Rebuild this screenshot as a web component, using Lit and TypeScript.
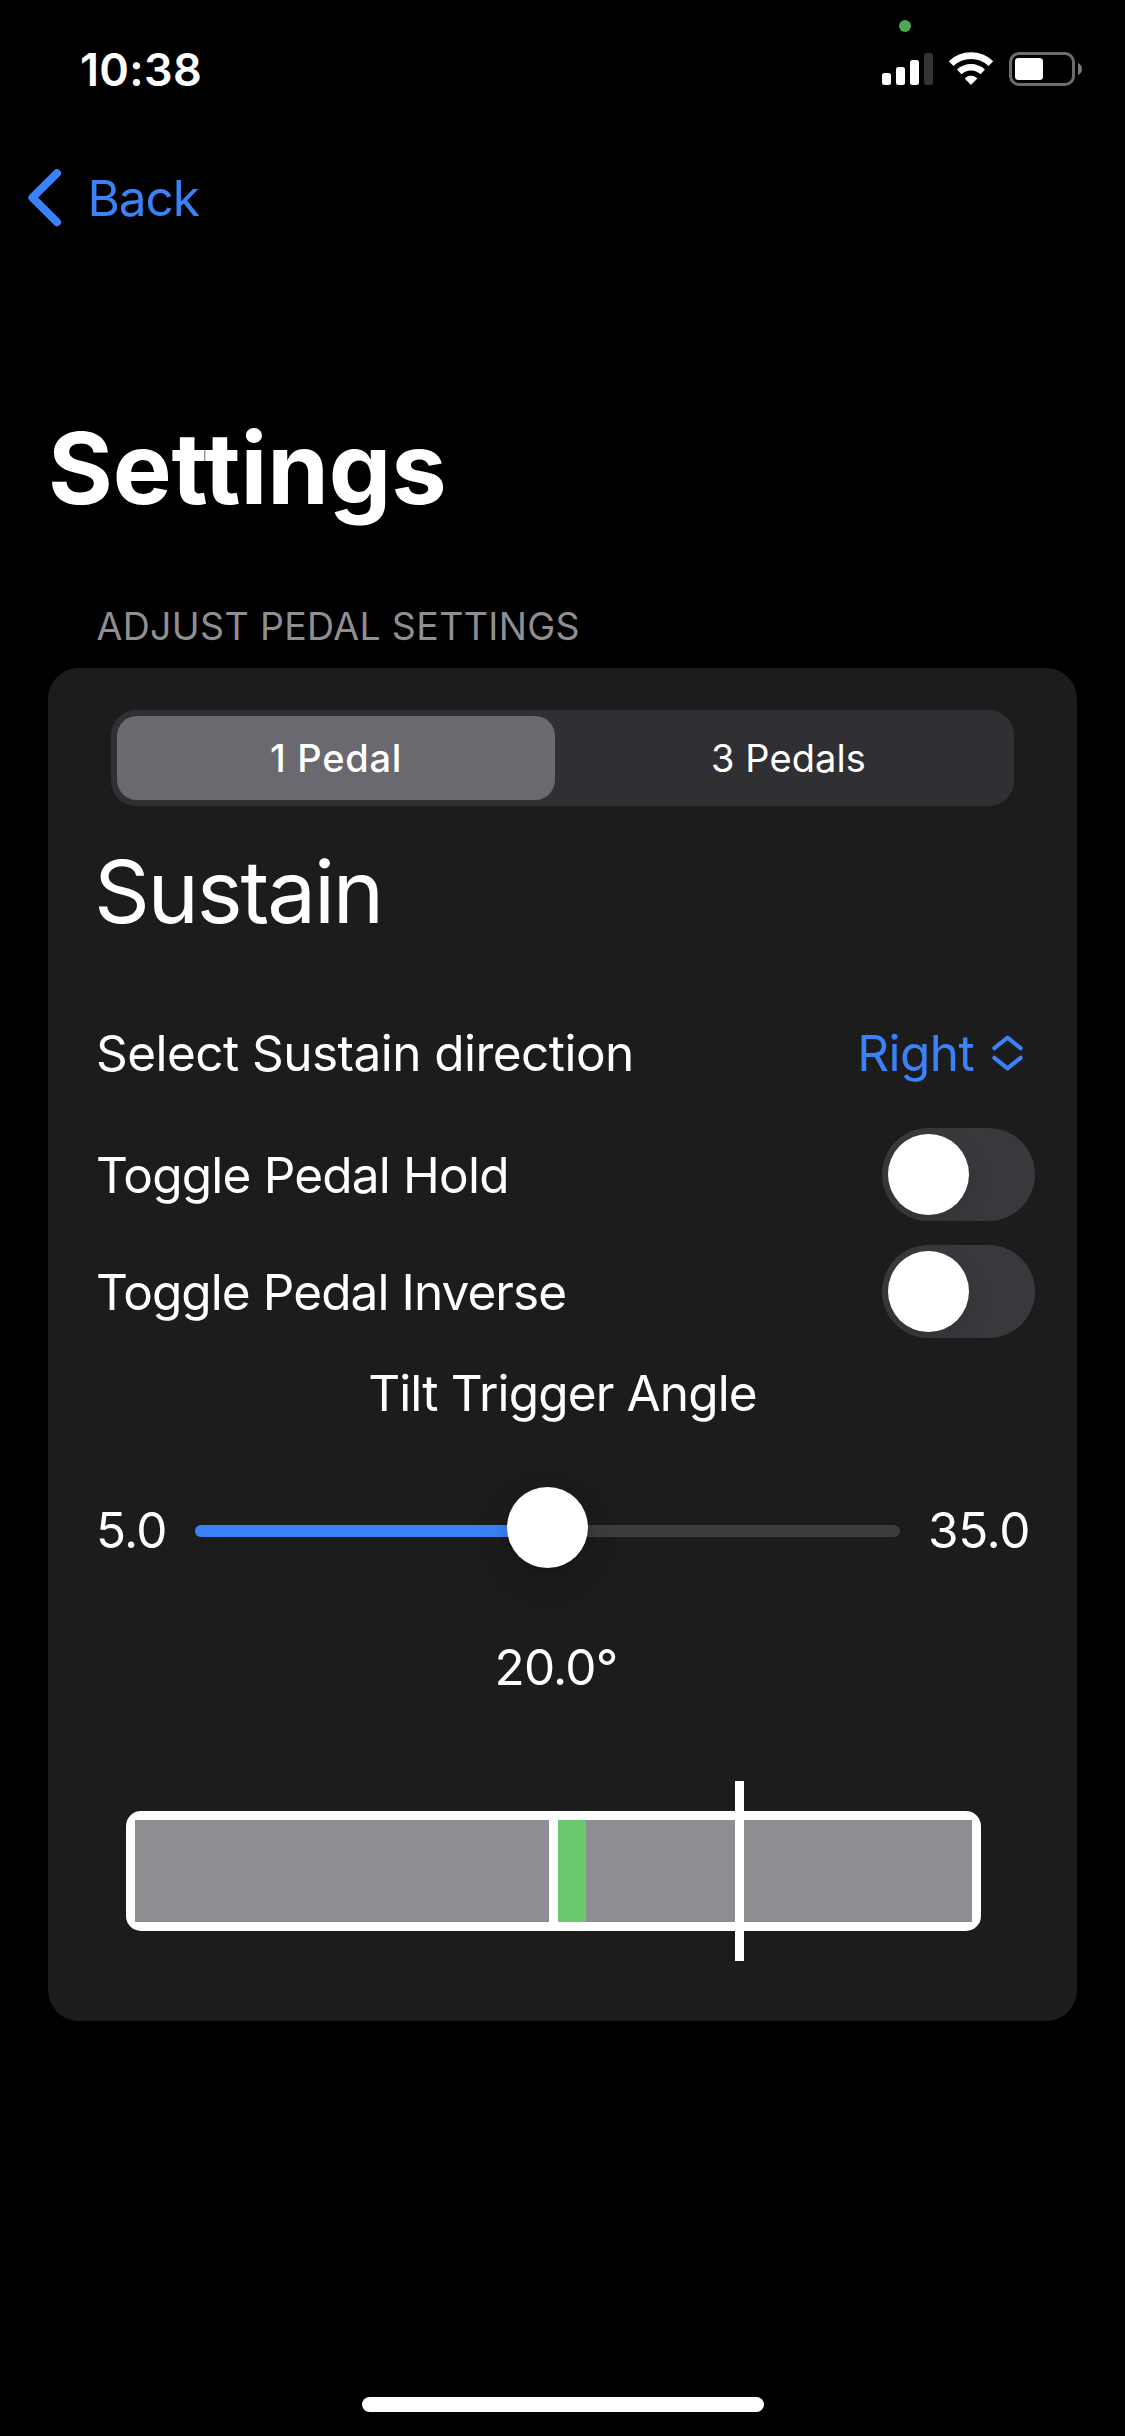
import { LitElement, html, css } from "lit";
import { customElement, property, state } from "lit/decorators.js";
import { classMap } from "lit/directives/class-map.js";

@customElement("status-bar")
export class StatusBar extends LitElement {
  static styles = css`
    :host {
      position: relative;
      display: flex;
      align-items: center;
      justify-content: space-between;
      box-sizing: border-box;
      height: 138px;
      padding: 0 43px 0 80px;
    }
    .time {
      font-size: 45px;
      font-weight: 600;
      letter-spacing: 0.3px;
      line-height: 1;
    }
    .icons {
      display: flex;
      gap: 14px;
    }
    .privacy {
      position: absolute;
      left: 899px;
      top: 20px;
      width: 12px;
      height: 12px;
      border-radius: 50%;
      background: #53a653;
    }
  `;

  render() {
    return html`
      <span class="time">10:38</span>
      <span class="privacy"></span>
      <div class="icons">
        <svg width="51" height="34" viewBox="0 0 51 34" fill="#fff">
          <rect x="0" y="21" width="9" height="12" rx="2.5" />
          <rect x="14" y="15" width="9" height="18" rx="2.5" />
          <rect x="28" y="8" width="9" height="25" rx="2.5" />
          <rect x="42" y="1" width="9" height="32" rx="2.5" fill="#333" />
        </svg>
        <svg width="48" height="34" viewBox="-24 0 48 34" fill="none" stroke="#fff">
          <path d="M-19.9 11.6A29 29 0 0 1 19.9 11.6" stroke-width="6.8" />
          <path d="M-11.8 19.9A17.3 17.3 0 0 1 11.8 19.9" stroke-width="6.4" />
          <path
            d="M0 32.4L-5.9 26.5A8.6 8.6 0 0 1 5.9 26.5Z"
            fill="#fff"
            stroke-width="1"
            stroke-linejoin="round"
          />
        </svg>
        <svg width="73" height="34" viewBox="0 0 73 34" fill="none">
          <rect x="1.5" y="1.5" width="63" height="31" rx="8.5" stroke="#6d6d6d" stroke-width="3" />
          <rect x="6" y="6" width="28" height="22" rx="3.5" fill="#fff" />
          <path d="M69 11C71.8 12 73 14.4 73 17S71.8 22 69 23Z" fill="#7a7a7a" />
        </svg>
      </div>
    `;
  }
}

@customElement("toggle-switch")
export class ToggleSwitch extends LitElement {
  @property({ type: Boolean }) on = false;

  static styles = css`
    :host {
      display: block;
    }
    .track {
      display: flex;
      box-sizing: border-box;
      width: 153px;
      height: 93px;
      padding: 6px;
      border-radius: 46.5px;
      overflow: hidden;
      background: #39393d;
    }
    .track.on {
      justify-content: flex-end;
      background: #30d158;
    }
    .knob {
      width: 81px;
      height: 81px;
      border-radius: 50%;
      background: #fff;
      box-shadow: 0 9px 24px rgba(0, 0, 0, 0.1);
    }
  `;

  render() {
    return html`
      <div class=${classMap({ track: true, on: this.on })} @click=${() => (this.on = !this.on)}>
        <div class="knob"></div>
      </div>
    `;
  }
}

@customElement("angle-slider")
export class AngleSlider extends LitElement {
  @property({ type: Number }) min = 0;
  @property({ type: Number }) max = 1;
  @property({ type: Number }) value = 0;

  static styles = css`
    :host {
      display: flex;
      align-items: center;
      height: 12px;
    }
    .track {
      position: relative;
      flex: 1;
      height: 12px;
      border-radius: 6px;
      background: #3c3c3f;
    }
    .fill {
      height: 12px;
      border-radius: 6px 0 0 6px;
      background: #3a82f7;
    }
    .knob {
      position: absolute;
      top: -38px;
      width: 81px;
      height: 81px;
      margin-left: -40.5px;
      border-radius: 50%;
      background: #fff;
      box-shadow: 0 12px 36px rgba(0, 0, 0, 0.14), 0 3px 10px rgba(0, 0, 0, 0.1);
    }
  `;

  render() {
    const percent = ((this.value - this.min) / (this.max - this.min)) * 100;
    return html`
      <div class="track">
        <div class="fill" style="width:${percent}%"></div>
        <div class="knob" style="left:${percent}%"></div>
      </div>
    `;
  }
}

@customElement("tilt-gauge")
export class TiltGauge extends LitElement {
  @property({ type: Number }) tilt = 28;
  @property({ type: Number }) trigger = 186;

  static styles = css`
    :host {
      display: block;
    }
    .frame {
      position: relative;
      box-sizing: border-box;
      height: 120px;
      padding: 9px;
      border-radius: 15px;
      background: #fff;
    }
    .halves {
      display: grid;
      grid-template-columns: 1fr 1fr;
      gap: 9px;
      height: 102px;
    }
    .half {
      background: #8e8d92;
    }
    .level {
      height: 100%;
      background: #69c96c;
    }
    .marker {
      position: absolute;
      top: -30px;
      width: 9px;
      height: 180px;
      background: #fff;
    }
  `;

  render() {
    return html`
      <div class="frame">
        <div class="halves">
          <div class="half"></div>
          <div class="half"><div class="level" style="width:${this.tilt}px"></div></div>
        </div>
        <div class="marker" style="left:calc(50% - 4.5px + ${this.trigger}px)"></div>
      </div>
    `;
  }
}

@customElement("app-root")
export class AppRoot extends LitElement {
  @state() private pedals = 1;

  static styles = css`
    :host {
      display: flex;
      flex-direction: column;
      box-sizing: border-box;
      width: 1125px;
      height: 2436px;
      padding-bottom: 24px;
      overflow: hidden;
      background: #000;
      color: #fff;
      font-family: Inter, "Liberation Sans", sans-serif;
      font-size: 49.5px;
      letter-spacing: -0.8px;
      white-space: nowrap;
    }
    .nav {
      display: flex;
      align-items: center;
      gap: 25.5px;
      height: 120px;
      padding-left: 27px;
      color: #3a82f7;
    }
    .back {
      letter-spacing: -1.1px;
    }
    h1 {
      margin: 150px 0 0 48px;
      font-size: 99px;
      font-weight: 700;
      line-height: 120px;
      letter-spacing: -0.1px;
    }
    .section {
      margin: 57px 0 -1px 96.5px;
      color: #8e8e93;
      font-size: 37.5px;
      line-height: 84px;
      letter-spacing: 0.34px;
    }
    .card {
      display: flex;
      flex-direction: column;
      box-sizing: border-box;
      height: 1353px;
      margin: 0 48px;
      padding: 42px 42px 0 48px;
      border-radius: 31px;
      background: #1c1c1c;
    }
    .segments {
      display: grid;
      grid-template-columns: 438px 1fr;
      box-sizing: border-box;
      height: 96px;
      margin: 0 21px 0 15px;
      padding: 6px;
      border-radius: 25px;
      background: #302f34;
      font-size: 38px;
      letter-spacing: 0.1px;
    }
    .segment {
      display: flex;
      align-items: center;
      justify-content: center;
      border-radius: 20px;
    }
    .segment:last-child {
      padding-left: 14px;
    }
    .segment.selected {
      background: #6a696f;
      font-weight: 500;
      letter-spacing: 0.7px;
    }
    h2 {
      margin: 1px 0 -1px -2px;
      font-size: 87px;
      font-weight: 400;
      line-height: 170px;
      letter-spacing: -2.2px;
    }
    .row {
      display: flex;
      align-items: center;
      justify-content: space-between;
      height: 93px;
    }
    .row + .row {
      margin-top: 24px;
    }
    .direction {
      height: 154px;
      margin-bottom: -2px;
    }
    .direction .label {
      letter-spacing: -0.54px;
    }
    .inverse {
      letter-spacing: -0.92px;
    }
    .picker {
      display: flex;
      align-items: center;
      gap: 17px;
      padding-right: 11px;
      color: #3a82f7;
      letter-spacing: -0.6px;
    }
    .direction + .row {
      margin-top: 0;
    }
    .caption {
      margin-right: 6px;
      line-height: 110px;
      letter-spacing: -0.85px;
      text-align: center;
    }
    .slider {
      display: grid;
      grid-template-columns: 99px 705px 1fr;
      align-items: center;
      height: 166px;
    }
    .limit {
      margin-top: -2px;
    }
    .max {
      padding-left: 28px;
      letter-spacing: -0.4px;
    }
    .value {
      margin-right: 19px;
      line-height: 106px;
      text-align: center;
    }
    tilt-gauge {
      margin: 91px 54px 0 30px;
    }
    .home {
      width: 402px;
      height: 15px;
      margin: auto auto 0 362px;
      border-radius: 7.5px;
      background: #fff;
    }
  `;

  private segment(count: number, label: string) {
    return html`<div
      class=${classMap({ segment: true, selected: this.pedals === count })}
      @click=${() => (this.pedals = count)}
    >${label}</div>`;
  }

  render() {
    return html`
      <status-bar></status-bar>
      <div class="nav">
        <svg width="35" height="60" viewBox="0 0 35 60" fill="none" stroke="#3a82f7"
          stroke-width="8" stroke-linecap="round" stroke-linejoin="round">
          <path d="M30 5.2L5.4 29.7L30 54.2" />
        </svg>
        <span class="back">Back</span>
      </div>
      <h1>Settings</h1>
      <div class="section">ADJUST PEDAL SETTINGS</div>
      <div class="card">
        <div class="segments">
          ${this.segment(1, "1 Pedal")}${this.segment(3, "3 Pedals")}
        </div>
        <h2>Sustain</h2>
        <div class="row direction">
          <span class="label">Select Sustain direction</span>
          <span class="picker">
            Right
            <svg width="33" height="38" viewBox="0 0 33 38" fill="none" stroke="#3a82f7"
              stroke-width="4.2" stroke-linecap="round" stroke-linejoin="round">
              <path d="M3.4 14.2L16.5 3.6L29.6 14.2M3.4 23.8L16.5 34.4L29.6 23.8" />
            </svg>
          </span>
        </div>
        <div class="row">
          <span>Toggle Pedal Hold</span>
          <toggle-switch></toggle-switch>
        </div>
        <div class="row">
          <span class="inverse">Toggle Pedal Inverse</span>
          <toggle-switch></toggle-switch>
        </div>
        <div class="caption">Tilt Trigger Angle</div>
        <div class="slider">
          <span class="limit">5.0</span>
          <angle-slider min="5" max="35" value="20"></angle-slider>
          <span class="limit max">35.0</span>
        </div>
        <div class="value">20.0°</div>
        <tilt-gauge></tilt-gauge>
      </div>
      <div class="home"></div>
    `;
  }
}
